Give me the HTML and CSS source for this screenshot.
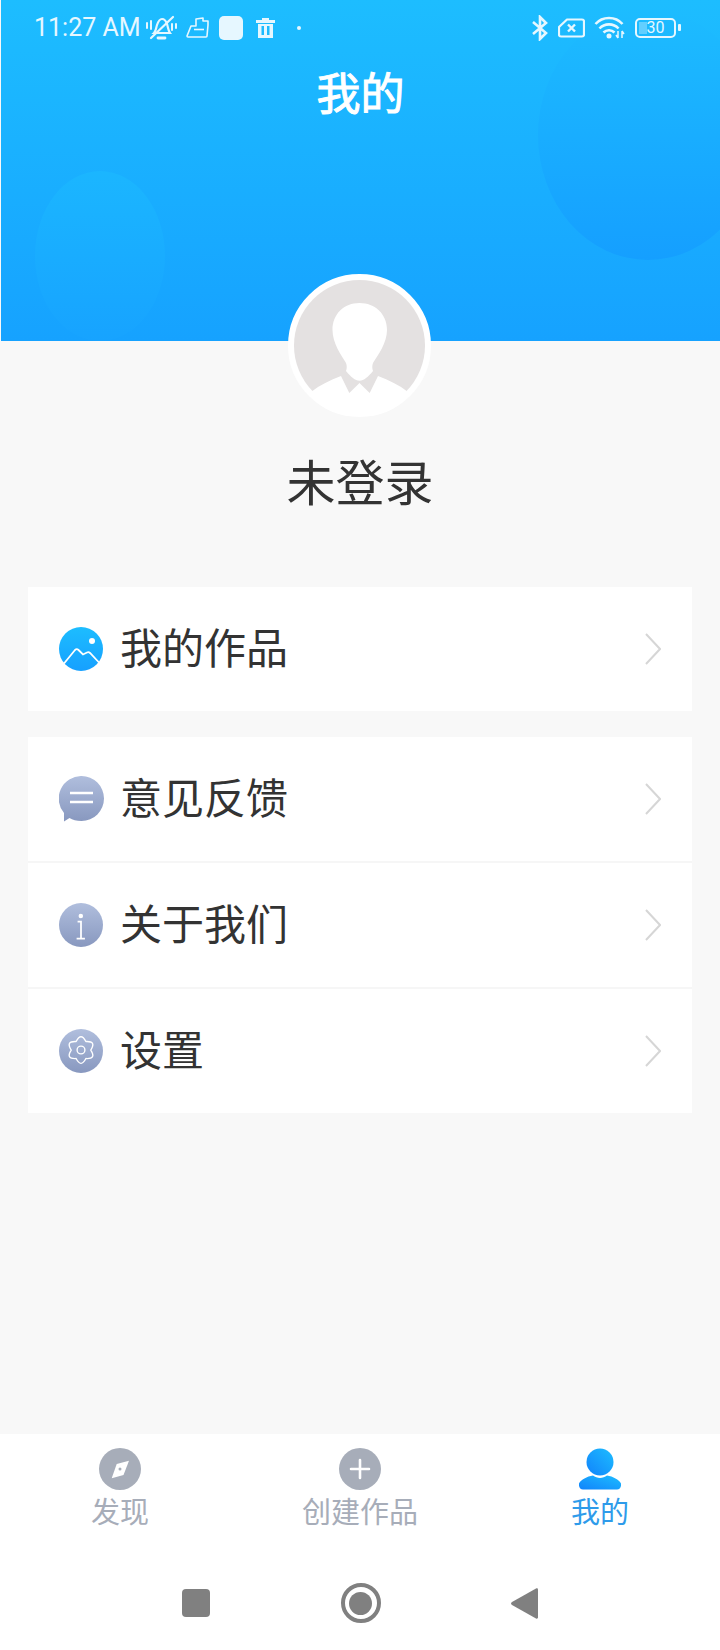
FILE: index.html
```html
<!DOCTYPE html>
<html lang="zh-CN">
  <head>
    <meta charset="UTF-8" />
    <meta name="viewport" content="width=device-width, initial-scale=1.0" />
    <title>我的</title>
    <link rel="stylesheet" href="styles.css">
  </head>
  <body>
    <div class="page">
      <!-- Blue header with status bar and title -->
      <header class="header">
        <div class="blob blob-left"></div>
        <div class="blob blob-right"></div>
        <div class="status-bar">
          <div class="status-left">
            <span class="status-time">11:27 AM</span>
            <svg class="icon-bell" width="31" height="25" viewBox="0 0 31 25" fill="none" stroke="#e6f7ff" stroke-width="2.200" stroke-linecap="round">
              <path d="M8 18c2-2 2-5 3-8 1-3 3-6 5-6s4 2 5 5c1 3 1 6 3 9z"/>
              <path d="M12 23h7" stroke-width="2.800"/>
              <path d="M5 23L27 2"/>
              <path d="M1 8v5M5 6v8M26 9v6M30 9v4" stroke-width="2"/>
            </svg>
            <svg class="icon-bag" width="23" height="21" viewBox="0 0 23 21" fill="none" stroke="#e6f7ff" stroke-width="1.600" stroke-linejoin="round">
              <path d="M5 9h5V2l7-1v3h5v4l-1 11c0 1-1 1-1 1H2c-1 0-1-1-1-1z"/>
              <path d="M8 12.500h10"/>
            </svg>
            <span class="status-square"></span>
            <svg class="icon-trash" width="19" height="20" viewBox="0 0 19 20" fill="#e6f7ff">
              <path d="M6 0h7v2h6v3H0V2h6z"/>
              <path d="M2 6h15v14H2zM5.500 8v9h2.500V8zM11 8v9h2.500V8z" fill-rule="evenodd"/>
            </svg>
            <span class="status-dot"></span>
          </div>
          <div class="status-right">
            <svg width="16" height="26" viewBox="0 0 16 26" fill="none" stroke="#e6f7ff" stroke-width="2.600">
              <path d="M1 7l13 11-6 6V2l6 6L1 19"/>
            </svg>
            <svg class="icon-sim" width="27" height="20" viewBox="0 0 27 20" fill="none" stroke="#e6f7ff" stroke-width="2.200">
              <path d="M9 1.500h15a2 2 0 0 1 2 2v13a2 2 0 0 1-2 2H3a2 2 0 0 1-2-2V9z" stroke-linejoin="round"/>
              <path d="M10 6.500l7 7M17 6.500l-7 7" stroke-width="2.400"/>
            </svg>
            <svg class="icon-wifi" width="31" height="23" viewBox="0 0 31 23" fill="none" stroke="#e6f7ff" stroke-width="2.600">
              <path d="M1.500 8c7-8 20-8 27 0"/>
              <path d="M5.500 12.500c5-5.500 14-5.500 19 0"/>
              <path d="M9.500 16.500c3-3 8-3 11 0"/>
              <circle cx="15" cy="20" r="2.500" fill="#e6f7ff" stroke="none"/>
              <path d="M24 15v7M22 19l2 3M28 15v7M30 18l-2-3" stroke-width="1.500"/>
            </svg>
            <div class="battery">
              <span class="battery-body"><span class="battery-level"></span>30</span>
              <span class="battery-cap"></span>
            </div>
          </div>
        </div>
        <h1 class="page-title">我的</h1>
      </header>

      <!-- Avatar and login state -->
      <section class="profile">
        <div class="avatar">
          <svg width="131" height="131" viewBox="0 0 131 131">
            <circle cx="65.500" cy="65.500" r="65.500" fill="#e4e1e1"/>
            <path d="M17 112C26 105 36 100 47 96L55.300 113 65.500 103 75.700 113 84 96C95 100 105 105 114 112A65.500 65.500 0 0 1 17 112z" fill="#fff"/>
            <path d="M65.500 23C81 23 93 34 93 50 93 63 84 75 79 83 78 86 78 88 79 91 74 97 70 100.700 65.500 100.700S57 97 52 91C53 88 53 86 52 83 47 75 38.500 63 38.500 50 38.500 34 50 23 65.500 23z" fill="#fff"/>
          </svg>
        </div>
        <p class="profile-name">未登录</p>
      </section>

      <!-- Menu cards -->
      <main class="menus">
        <div class="card card-single">
          <a class="menu-row">
            <svg class="menu-icon" width="44" height="44" viewBox="0 0 44 44">
              <defs>
                <linearGradient id="blue-grad" x1="0" y1="0" x2="0" y2="1">
                  <stop offset="0" stop-color="#1dbdff"/>
                  <stop offset="1" stop-color="#16a0ff"/>
                </linearGradient>
              </defs>
              <circle cx="22" cy="22" r="22" fill="url(#blue-grad)"/>
              <circle cx="33" cy="14" r="3" fill="#fff"/>
              <path d="M5 36.500L16 23c1-1 2.500-1 3.500 0L24 27.500 28 25.500c1-.5 2-.5 3 .5l9 9.500" fill="none" stroke="#fff" stroke-width="1.800"/>
            </svg>
            <span class="menu-label">我的作品</span>
            <svg class="chevron" width="16" height="32" viewBox="0 0 16 32" fill="none" stroke="#d6d6d6" stroke-width="2">
              <path d="M1 1l14 15L1 31"/>
            </svg>
          </a>
        </div>
        <div class="card card-list">
          <a class="menu-row">
            <svg class="menu-icon" width="45" height="46" viewBox="0 0 45 46">
              <defs>
                <linearGradient id="grey-grad" x1="0" y1="0" x2="0" y2="1">
                  <stop offset="0" stop-color="#b0bedd"/>
                  <stop offset="1" stop-color="#8898bf"/>
                </linearGradient>
              </defs>
              <path d="M22.500 0a22.500 22.500 0 1 1 0 45c-5 0-9-1-12-3l-5.500 3.500V37A22.500 22.500 0 0 1 22.500 0z" fill="url(#grey-grad)"/>
              <path d="M11 17h23M11 26h23" stroke="#fff" stroke-width="2.400" fill="none"/>
            </svg>
            <span class="menu-label menu-label-offset">意见反馈</span>
            <svg class="chevron" width="16" height="32" viewBox="0 0 16 32" fill="none" stroke="#d6d6d6" stroke-width="2">
              <path d="M1 1l14 15L1 31"/>
            </svg>
          </a>
          <a class="menu-row">
            <svg class="menu-icon" width="44" height="44" viewBox="0 0 45 45">
              <circle cx="22.500" cy="22.500" r="22.500" fill="url(#grey-grad)"/>
              <circle cx="22.300" cy="13.300" r="2.300" fill="#fff"/>
              <path d="M19 19h3.500v17.500M18 36.500h8.500" fill="none" stroke="#fff" stroke-width="1.800"/>
            </svg>
            <span class="menu-label">关于我们</span>
            <svg class="chevron" width="16" height="32" viewBox="0 0 16 32" fill="none" stroke="#d6d6d6" stroke-width="2">
              <path d="M1 1l14 15L1 31"/>
            </svg>
          </a>
          <a class="menu-row">
            <svg class="menu-icon" width="44" height="44" viewBox="0 0 45 45">
              <circle cx="22.500" cy="22.500" r="22.500" fill="url(#grey-grad)"/>
              <path d="M17.500 12.800Q22.500 3 27.500 12.800 38.500 12.250 32.500 21.500 38.500 30.750 27.500 30.200 22.500 40 17.500 30.200 6.500 30.750 12.500 21.500 6.500 12.250 17.500 12.800z" fill="none" stroke="#fff" stroke-width="1.400" stroke-linejoin="round"/>
              <circle cx="22.500" cy="21.500" r="4" fill="none" stroke="#fff" stroke-width="1.400"/>
            </svg>
            <span class="menu-label">设置</span>
            <svg class="chevron" width="16" height="32" viewBox="0 0 16 32" fill="none" stroke="#d6d6d6" stroke-width="2">
              <path d="M1 1l14 15L1 31"/>
            </svg>
          </a>
        </div>
      </main>

      <!-- Bottom tab bar -->
      <nav class="tabbar">
        <a class="tab">
          <svg width="42" height="42" viewBox="0 0 42 42">
            <circle cx="21" cy="21" r="21" fill="#a7adb9"/>
            <path d="M30 12.700L24.500 27 12.700 30.300 17.700 16z" fill="#fff"/>
            <circle cx="21" cy="21" r="1.500" fill="#a7adb9"/>
          </svg>
          <span class="tab-label">发现</span>
        </a>
        <a class="tab">
          <svg width="42" height="42" viewBox="0 0 42 42">
            <circle cx="21" cy="21" r="21" fill="#a7adb9"/>
            <path d="M21 12v18M12 21h18" stroke="#fff" stroke-width="2.600" stroke-linecap="round"/>
          </svg>
          <span class="tab-label">创建作品</span>
        </a>
        <a class="tab tab-active">
          <svg width="42" height="42" viewBox="0 0 42 42">
            <defs>
              <linearGradient id="tab-grad" x1="1" y1="0" x2="0" y2="1">
                <stop offset="0" stop-color="#1dbdff"/>
                <stop offset="1" stop-color="#1183fb"/>
              </linearGradient>
            </defs>
            <circle cx="21" cy="14" r="13.500" fill="url(#tab-grad)"/>
            <path d="M14 27.500c2 1.500 4.500 2.500 7 2.500s5-1 7-2.500c6 1 12 4 14 8 .5 3-1 6-4 6H4c-3 0-4.500-3-4-6 2-4 8-7 14-8z" fill="url(#tab-grad)"/>
          </svg>
          <span class="tab-label">我的</span>
        </a>
      </nav>

      <!-- Android navigation buttons -->
      <div class="system-nav">
        <span class="nav-square"></span>
        <span class="nav-circle"><span class="nav-circle-dot"></span></span>
        <svg class="nav-back" width="28" height="33" viewBox="0 0 28 33">
          <path d="M26 1.500L2 15c-1.300.8-1.300 2.200 0 3l24 13.500c1 .5 2 0 2-1V2.500c0-1-1-1.500-2-1z" fill="#808080"/>
        </svg>
      </div>
    </div>
  </body>
</html>
```
FILE: styles.css
```css
* {
  box-sizing: border-box;
}
body {
  margin: 0;
  background-color: #fff;
  font-family: "Noto Sans CJK SC", "Noto Sans", sans-serif;
}
.page {
  display: flex;
  flex-direction: column;
  width: 720px;
  height: 1650px;
  background-color: #f8f8f8;
  overflow: hidden;
}

.header {
  position: relative;
  height: 341px;
  margin-left: 1px;
  background: linear-gradient(180deg, #1dbdff 0%, #16a2ff 100%);
  overflow: hidden;
}
.blob {
  position: absolute;
  border-radius: 50%;
}
.blob-left {
  left: 34px;
  top: 171px;
  width: 130px;
  height: 170px;
  background: linear-gradient(180deg, #1bb6ff 0%, #17a3ff 100%);
}
.blob-right {
  left: 537px;
  top: 10px;
  width: 220px;
  height: 250px;
  background: linear-gradient(180deg, #1dbcff 0%, #159fff 100%);
}

.status-bar {
  position: relative;
  display: flex;
  justify-content: space-between;
  align-items: center;
  height: 55px;
  padding: 0 39px 0 33px;
  color: #e6f7ff;
}
.status-left,
.status-right {
  display: flex;
  align-items: center;
}
.status-time {
  font-family: Roboto, sans-serif;
  font-size: 25px;
}
.icon-bell {
  margin-left: 5px;
}
.icon-bag {
  margin-left: 9px;
}
.status-square {
  width: 24px;
  height: 24px;
  margin-left: 10px;
  border-radius: 5px;
  background-color: #e6f7ff;
}
.icon-trash {
  margin-left: 13px;
}
.status-dot {
  width: 4px;
  height: 4px;
  margin-left: 22px;
  border-radius: 50%;
  background-color: #e6f7ff;
}
.icon-sim {
  margin-left: 10px;
}
.icon-wifi {
  margin-left: 9px;
}
.battery {
  display: flex;
  align-items: center;
  margin-left: 10px;
}
.battery-body {
  position: relative;
  display: block;
  width: 41px;
  height: 20px;
  border: 2px solid #e6f7ff;
  border-radius: 5px;
  font-family: Roboto, sans-serif;
  font-size: 16px;
  line-height: 16px;
  text-align: center;
}
.battery-level {
  position: absolute;
  left: 2px;
  top: 2px;
  width: 8px;
  height: 12px;
  background-color: rgba(230, 247, 255, 0.35);
}
.battery-cap {
  width: 3px;
  height: 7px;
  margin-left: 2px;
  border-radius: 1px;
  background-color: #e6f7ff;
}

.page-title {
  position: relative;
  margin: 0;
  padding-top: 6px;
  color: #fff;
  font-size: 44px;
  font-weight: 400;
  line-height: 60px;
  text-align: center;
  -webkit-text-stroke: 1px #fff;
}

.profile {
  display: flex;
  flex-direction: column;
  align-items: center;
}
.avatar {
  position: relative;
  width: 143px;
  height: 143px;
  margin-top: -67px;
  margin-right: 1px;
  border: 6px solid #fff;
  border-radius: 50%;
  background-color: #fff;
}
.avatar svg {
  display: block;
}
.profile-name {
  margin: 28px 0 0;
  color: #333;
  font-size: 49px;
  line-height: 70px;
}

.menus {
  display: flex;
  flex-direction: column;
  gap: 26px;
  margin: 72px 28px 0;
}
.card {
  display: flex;
  flex-direction: column;
  background-color: #fff;
}
.card-single {
  height: 124px;
}
.card-list {
  height: 376px;
}
.menu-row {
  display: flex;
  flex: 1;
  align-items: center;
  padding: 0 31px;
  border-top: 2px solid #f6f6f6;
}
.menu-row:first-child {
  border-top: none;
}
.menu-icon {
  flex-shrink: 0;
}
.menu-label {
  flex: 1;
  margin-left: 17px;
  padding-bottom: 8px;
  color: #333;
  font-size: 42px;
}
.menu-label-offset {
  margin-left: 16px;
}

.tabbar {
  display: flex;
  margin-top: auto;
  height: 126px;
  padding-top: 14px;
  background-color: #fff;
}
.tab {
  display: flex;
  flex: 1;
  flex-direction: column;
  align-items: center;
  color: #a7adb9;
}
.tab svg {
  display: block;
}
.tab-label {
  font-size: 29px;
  line-height: 40px;
}
.tab-active {
  color: #2e9bea;
}

.system-nav {
  display: flex;
  justify-content: center;
  align-items: center;
  height: 90px;
  padding: 0 2px 4px 1px;
  background-color: #fff;
}
.nav-square {
  width: 28px;
  height: 28px;
  margin-right: 131px;
  border-radius: 4px;
  background-color: #808080;
}
.nav-circle {
  display: flex;
  justify-content: center;
  align-items: center;
  width: 40px;
  height: 40px;
  border: 4px solid #808080;
  border-radius: 50%;
}
.nav-circle-dot {
  width: 23px;
  height: 23px;
  border-radius: 50%;
  background-color: #808080;
}
.nav-back {
  margin-left: 129px;
}
```
